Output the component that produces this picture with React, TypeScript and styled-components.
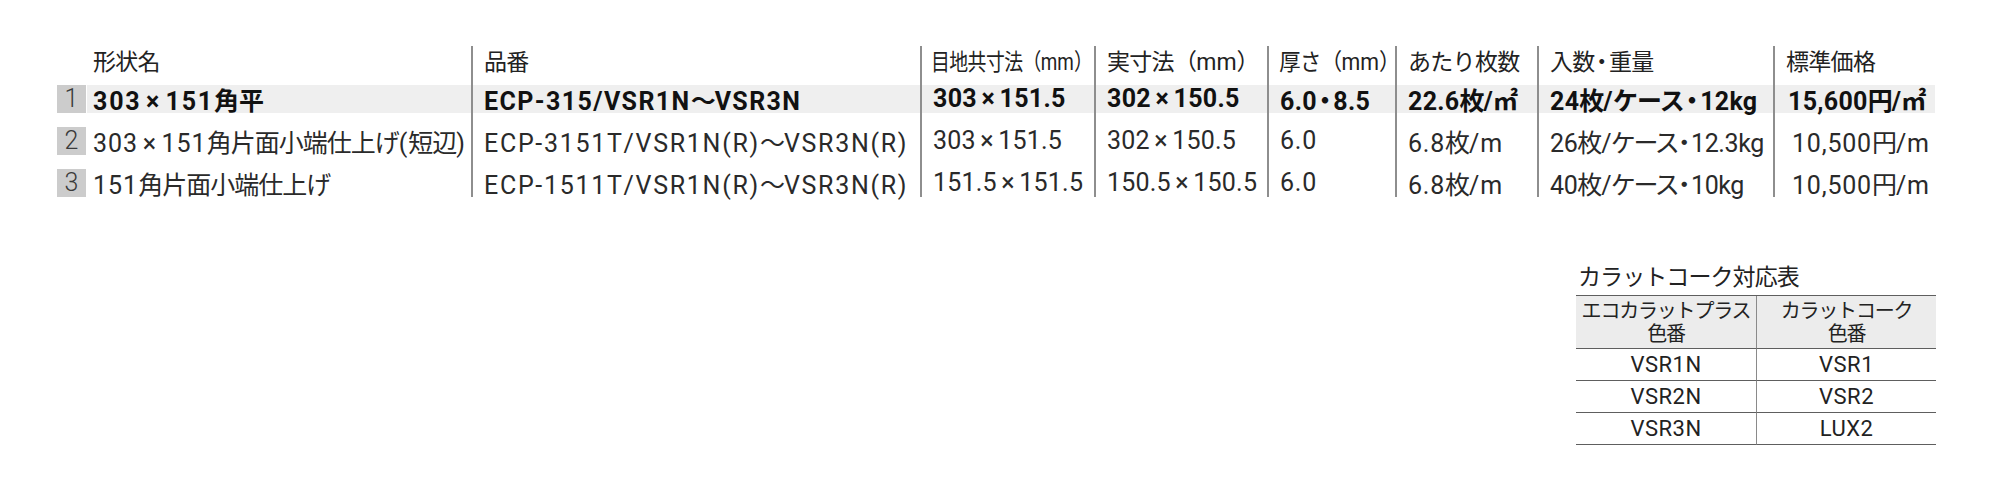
import React from "react";
import styled, { createGlobalStyle } from "styled-components";

const GlobalStyle = createGlobalStyle`
  body {
    margin: 0;
    background: #fff;
  }
`;

const COLS = "30px 384px 449px 174px 173px 128px 142px 236px 162px";

const Page = styled.div`
  width: 1999px;
  height: 484px;
  box-sizing: border-box;
  padding: 46px 0 0 57px;
  font-family: Roboto, "Noto Sans CJK JP", sans-serif;
  color: #1c1c1c;
`;

const Frame = styled.div`
  width: 1879px;
  display: flex;
  flex-direction: column;
`;

const SpecTable = styled.div`
  display: flex;
  flex-direction: column;
`;

const Row = styled.div<{ $height: number }>`
  display: grid;
  grid-template-columns: ${COLS};
  height: ${(p) => p.$height}px;
`;

const Cell = styled.div<{ $sep?: boolean }>`
  border-left: ${(p) => (p.$sep ? "2px solid #8e8e8e" : "none")};
  min-width: 0;
`;

const HeadText = styled.div<{ $pad: number; $squeeze?: number }>`
  padding-left: ${(p) => p.$pad}px;
  font-size: 23px;
  line-height: 28px;
  font-weight: 400;
  color: #222;
  white-space: nowrap;
  transform: scaleX(${(p) => p.$squeeze ?? 1});
  transform-origin: left center;
  --cjk: -0.03em;
  --dot: 0.06em;
`;

type FillProps = {
  $hl?: boolean;
  $bold?: boolean;
  $pad: number;
  $ls: number;
  $cjk: number;
  $palt?: boolean;
};

const Fill = styled.div<FillProps>`
  height: 28px;
  line-height: 28px;
  padding-left: ${(p) => p.$pad}px;
  background: ${(p) => (p.$hl ? "#efefef" : "transparent")};
  font-size: 25px;
  font-weight: ${(p) => (p.$bold ? 700 : 400)};
  color: ${(p) => (p.$bold ? "#111" : "#2a2a2a")};
  letter-spacing: ${(p) => p.$ls}px;
  white-space: nowrap;
  --cjk: ${(p) => p.$cjk}em;
  --feat: ${(p) => (p.$palt ? '"palt"' : "normal")};
  --dot: ${(p) => (p.$palt ? 0.02 : 0.08)}em;
`;

const Num = styled.div`
  width: 29px;
  height: 28px;
  line-height: 28px;
  background: #cccccc;
  color: #3a3a3a;
  font-size: 25px;
  font-weight: 300;
  text-align: center;
`;

const Kanji = styled.span`
  font-family: "Noto Sans CJK JP", sans-serif;
  letter-spacing: var(--cjk, 0);
  font-feature-settings: var(--feat, normal);
`;

// middle dot, set proportionally with a little air
const Dot = styled.span`
  font-family: "Noto Sans CJK JP", sans-serif;
  font-feature-settings: "palt";
  letter-spacing: 0;
  margin: 0 var(--dot, 0.08em);
`;

// full-width brackets with their empty half trimmed
const Paren = styled.span<{ $open?: boolean }>`
  font-family: "Noto Sans CJK JP", sans-serif;
  letter-spacing: 0;
  margin-left: ${(p) => (p.$open ? "-0.4em" : "0")};
  margin-right: ${(p) => (p.$open ? "0" : "-0.4em")};
`;

const Times = styled.span`
  margin: 0 0.18em;
`;

const ColorBlock = styled.div`
  align-self: flex-end;
  width: 360px;
  margin-top: 63px;
  display: flex;
  flex-direction: column;
`;

const ColorTitle = styled.div`
  font-size: 23px;
  line-height: 30px;
  padding-left: 2px;
  margin-bottom: 2px;
  color: #222;
  white-space: nowrap;
  --cjk: -0.04em;
`;

const ColorTable = styled.div`
  display: grid;
  grid-template-columns: 180px 180px;
  border-top: 1px solid #5e5e5e;
`;

const ColorCell = styled.div<{ $head?: boolean; $split?: boolean }>`
  border-bottom: 1px solid #5e5e5e;
  border-left: ${(p) => (p.$split ? "1px solid #8a8a8a" : "none")};
  background: ${(p) => (p.$head ? "#ececec" : "transparent")};
  height: ${(p) => (p.$head ? 52 : 31)}px;
  display: flex;
  flex-direction: column;
  align-items: center;
  justify-content: center;
  font-size: ${(p) => (p.$head ? 20 : 22)}px;
  line-height: ${(p) => (p.$head ? 22 : 31)}px;
  letter-spacing: 0.5px;
  color: #222;
  text-align: center;
  white-space: nowrap;
  --cjk: -0.06em;
`;

const SPLIT = /(・|（|）|×|[\u3000-\u30fa\u30fc-\u33ff\u3400-\u9fff\uff00-\uffef]+)/;
const WIDE = /[\u3000-\u33ff\u3400-\u9fff\uff00-\uffef]/;

const Txt = ({ s }: { s: string }) => (
  <>
    {s
      .split(SPLIT)
      .filter((r) => r !== "")
      .map((r, i) =>
        r === "・" ? (
          <Dot key={i}>{r}</Dot>
        ) : r === "（" || r === "）" ? (
          <Paren key={i} $open={r === "（"}>
            {r}
          </Paren>
        ) : r === "×" ? (
          <Times key={i}>{r}</Times>
        ) : WIDE.test(r) ? (
          <Kanji key={i}>{r}</Kanji>
        ) : (
          <span key={i}>{r}</span>
        )
      )}
  </>
);

const headers: { text: string; squeeze?: number }[] = [
  { text: "形状名" },
  { text: "品番" },
  { text: "目地共寸法（mm）", squeeze: 0.82 },
  { text: "実寸法（mm）" },
  { text: "厚さ（mm）", squeeze: 0.93 },
  { text: "あたり枚数" },
  { text: "入数・重量" },
  { text: "標準価格" },
];

// per column: latin spacing and cjk spacing for the light / bold rows
const colSpec = [
  { light: 1.0, bold: 1.8, cjkL: -0.04, cjkB: 0 },
  { light: 1.7, bold: 1.4, cjkL: -0.04, cjkB: -0.04 },
  { light: 0.2, bold: 0.3, cjkL: -0.04, cjkB: -0.04 },
  { light: 0.2, bold: 0.3, cjkL: -0.04, cjkB: -0.04 },
  { light: 0.8, bold: 0.3, cjkL: -0.04, cjkB: -0.04 },
  { light: 0.8, bold: 0.3, cjkL: -0.04, cjkB: -0.04 },
  { light: -0.4, bold: 0.3, cjkL: -0.04, cjkB: -0.04 },
  { light: 0.8, bold: 0.3, cjkL: -0.04, cjkB: -0.04 },
];

const rows = [
  ["303×151角平", "ECP-315/VSR1N〜VSR3N", "303×151.5", "302×150.5", "6.0・8.5", "22.6枚/㎡", "24枚/ケース・12kg", "15,600円/㎡"],
  ["303×151角片面小端仕上げ(短辺)", "ECP-3151T/VSR1N(R)〜VSR3N(R)", "303×151.5", "302×150.5", "6.0", "6.8枚/m", "26枚/ケース・12.3kg", "10,500円/m"],
  ["151角片面小端仕上げ", "ECP-1511T/VSR1N(R)〜VSR3N(R)", "151.5×151.5", "150.5×150.5", "6.0", "6.8枚/m", "40枚/ケース・10kg", "10,500円/m"],
];

const colorRows = [
  ["VSR1N", "VSR1"],
  ["VSR2N", "VSR2"],
  ["VSR3N", "LUX2"],
];

export default function App() {
  return (
    <Page>
      <GlobalStyle />
      <Frame>
        <SpecTable>
          <Row $height={39}>
            <Cell />
            {headers.map((h, i) => (
              <Cell key={h.text} $sep={i > 0}>
                <HeadText $pad={i === 0 ? 6 : 11} $squeeze={h.squeeze}>
                  <Txt s={h.text} />
                </HeadText>
              </Cell>
            ))}
          </Row>
          {rows.map((r, ri) => {
            const bold = ri === 0;
            return (
              <Row key={ri} $height={ri === rows.length - 1 ? 28 : 42}>
                <Cell>
                  <Num>{ri + 1}</Num>
                </Cell>
                {r.map((c, ci) => {
                  const spec = colSpec[ci];
                  return (
                    <Cell key={ci} $sep={ci > 0}>
                      <Fill
                        $hl={bold}
                        $bold={bold}
                        $ls={bold ? spec.bold : spec.light}
                        $cjk={bold ? spec.cjkB : spec.cjkL}
                        $palt={!bold && ci === 6}
                        $pad={ci === 0 ? 6 : ci === 7 ? (bold ? 13 : 17) : 11}
                      >
                        <Txt s={c} />
                      </Fill>
                    </Cell>
                  );
                })}
              </Row>
            );
          })}
        </SpecTable>

        <ColorBlock>
          <ColorTitle>
            <Txt s="カラットコーク対応表" />
          </ColorTitle>
          <ColorTable>
            <ColorCell $head>
              <div><Txt s="エコカラットプラス" /></div>
              <div><Txt s="色番" /></div>
            </ColorCell>
            <ColorCell $head $split>
              <div><Txt s="カラットコーク" /></div>
              <div><Txt s="色番" /></div>
            </ColorCell>
            {colorRows.map(([a, b]) => (
              <React.Fragment key={a}>
                <ColorCell>{a}</ColorCell>
                <ColorCell $split>{b}</ColorCell>
              </React.Fragment>
            ))}
          </ColorTable>
        </ColorBlock>
      </Frame>
    </Page>
  );
}
